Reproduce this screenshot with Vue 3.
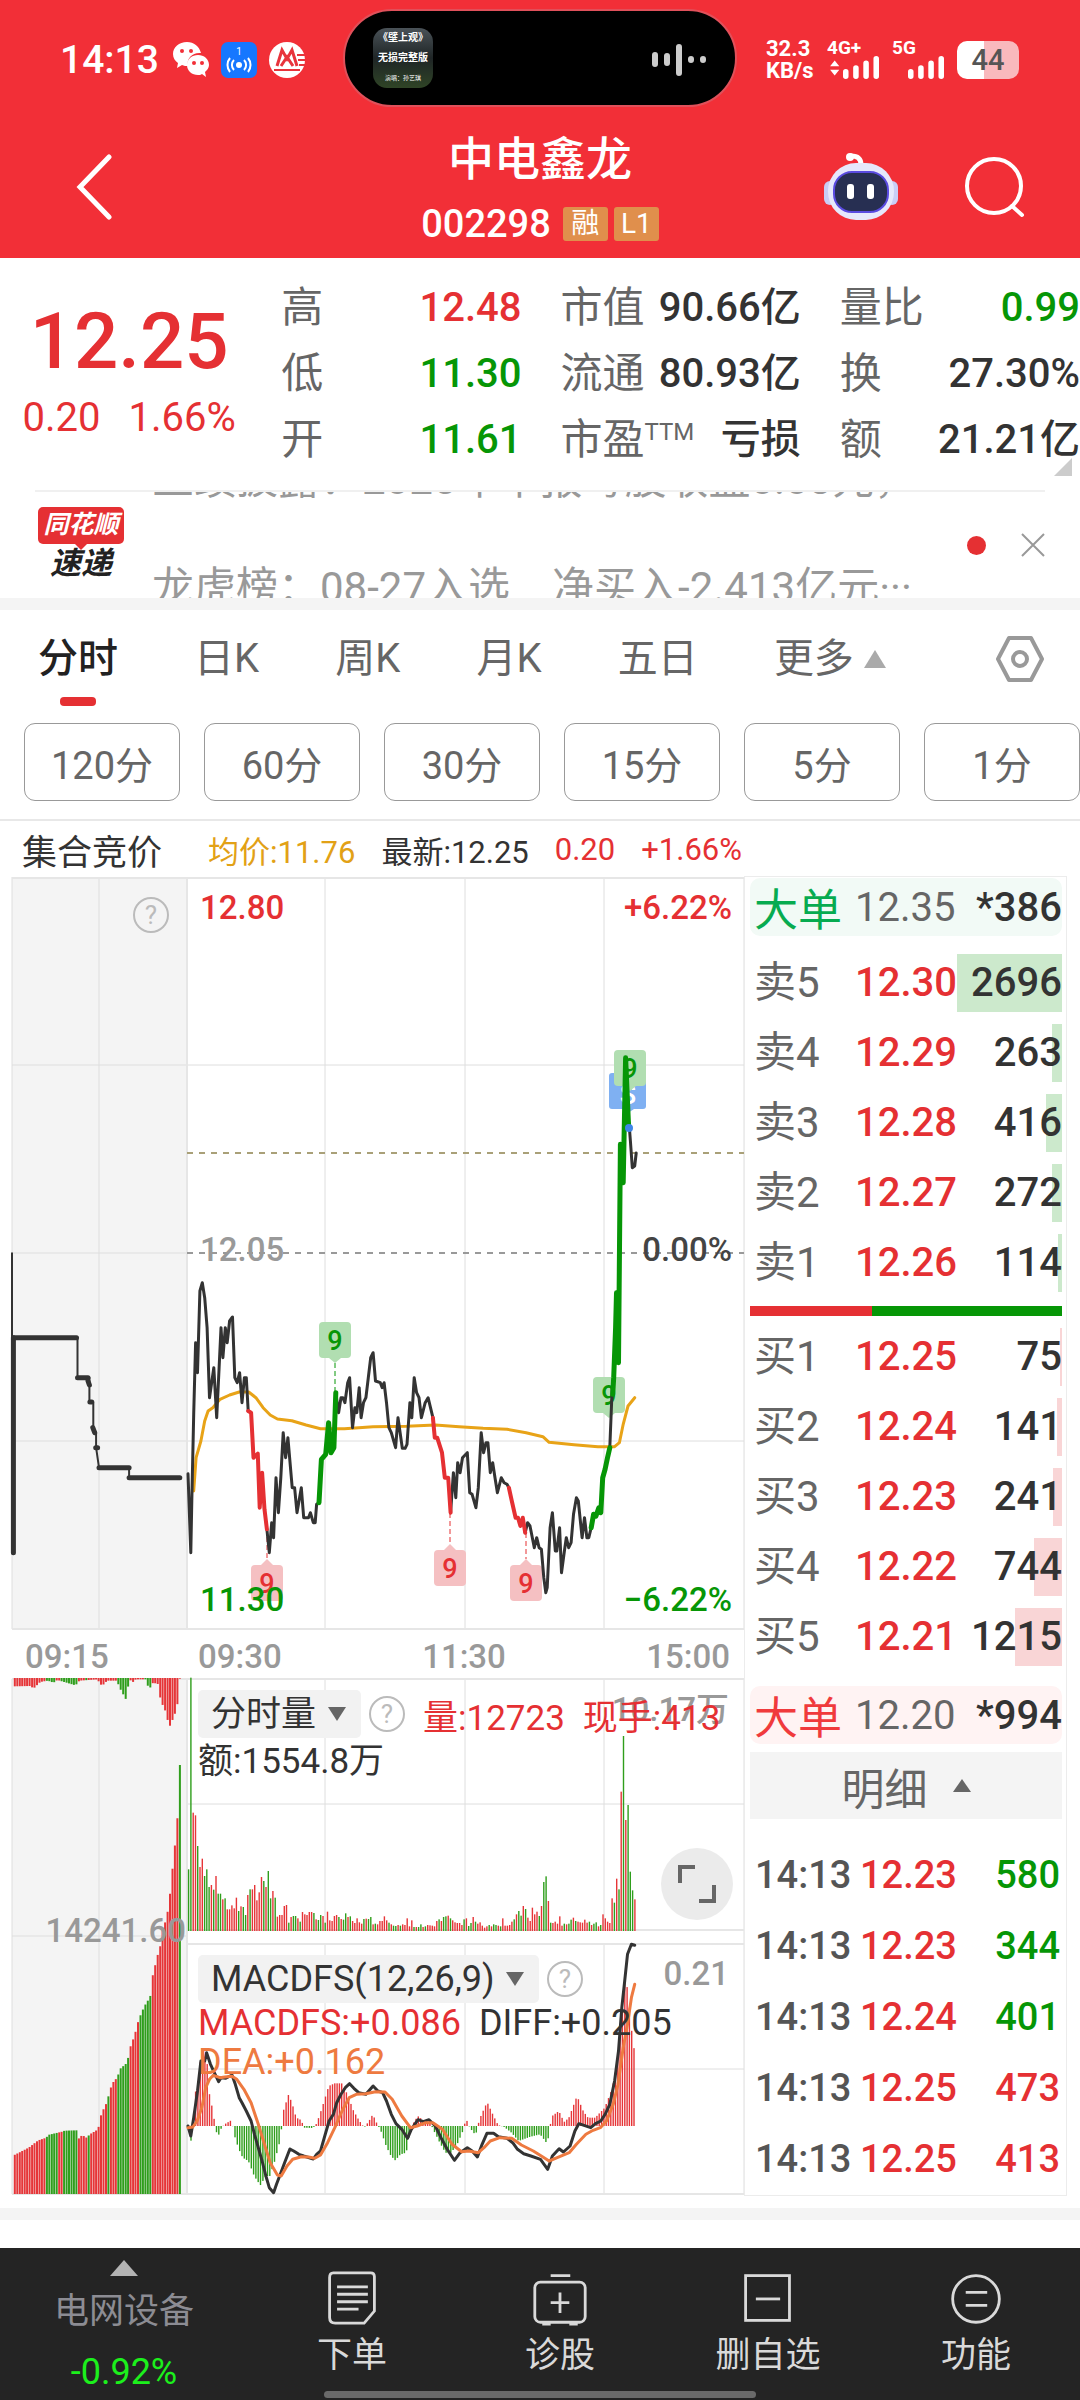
<script setup>
const quoteColumns = [
  [
    { label: '高', value: '12.48', tone: 'up' },
    { label: '低', value: '11.30', tone: 'down' },
    { label: '开', value: '11.61', tone: 'down' }
  ],
  [
    { label: '市值', value: '90.66亿' },
    { label: '流通', value: '80.93亿' },
    { label: '市盈', sup: 'TTM', value: '亏损' }
  ],
  [
    { label: '量比', value: '0.99', tone: 'down' },
    { label: '换', value: '27.30%' },
    { label: '额', value: '21.21亿' }
  ]
]

const tabs = ['日K', '周K', '月K', '五日']
const periods = ['120分', '60分', '30分', '15分', '5分', '1分']

const sells = [
  { label: '卖5', price: '12.30', volume: 2696, bar: 105 },
  { label: '卖4', price: '12.29', volume: 263, bar: 10 },
  { label: '卖3', price: '12.28', volume: 416, bar: 16 },
  { label: '卖2', price: '12.27', volume: 272, bar: 10 },
  { label: '卖1', price: '12.26', volume: 114, bar: 4 }
]
const buys = [
  { label: '买1', price: '12.25', volume: 75, bar: 2 },
  { label: '买2', price: '12.24', volume: 141, bar: 5 },
  { label: '买3', price: '12.23', volume: 241, bar: 9 },
  { label: '买4', price: '12.22', volume: 744, bar: 28 },
  { label: '买5', price: '12.21', volume: 1215, bar: 47 }
]
const trades = [
  { price: '12.23', volume: 580, tone: 'down' },
  { price: '12.23', volume: 344, tone: 'down' },
  { price: '12.24', volume: 401, tone: 'down' },
  { price: '12.25', volume: 473, tone: 'up' },
  { price: '12.25', volume: 413, tone: 'up' }
]

// Series are sampled on a finer grid than the drawing: x / 2.09, y / 3.
const gx = (x) => +(x / 2.0907).toFixed(1)
const parse = (s) => s.split(' ').map((p) => p.split(',').map(Number))
const line = (s, top) => parse(s).map(([x, y]) => `${gx(x)},${(top + y / 3).toFixed(1)}`).join(' ')

const priceSegments = [
  ['flat', '393,878 399,1115 401,960 405,700 409,485 413,575 418,330 423,305 428,350 433,440 438,650 447,560 453,710 458,560 462,440 466,530 471,440 475,485 480,420 486,408 491,590 496,605 501,575 506,665 511,590 515,590 519,690'],
  ['flat', '558,1045 563,1115 568,1025 572,1070 577,890 582,995 587,890 592,755 597,830 602,770 611,920 616,920 621,995 630,920 635,1010 645,1010 649,995 655,1025 659,1025 662,970 667,965'],
  ['flat', '702,635 708,695 713,650 717,650 721,665 727,605 731,590 737,740 742,680 746,695 751,620 755,710 760,665 765,650 770,590 775,530 780,515 785,600 795,605 799,620 803,605 808,665 813,740 818,755 827,800 832,710 841,802 847,802 851,790 857,665 861,710 866,590 871,635 876,650 881,710 889,665 895,650 900,680 905,710'],
  ['flat', '942,995 948,875 953,950 957,845 962,875 967,830 977,815 982,935 987,940 995,980 1000,920 1006,755 1011,815 1016,785 1020,785 1025,875 1030,845 1035,890 1040,935 1048,890 1054,905 1060,910 1064,920'],
  ['flat', '1098,1055 1103,1025 1108,1035 1117,1100 1122,1070 1127,1100 1132,1105 1137,1190 1141,1235 1144,1220 1150,1040 1155,995 1161,1110 1164,1110 1170,1040 1174,1175 1180,1110 1184,1070 1189,1100 1194,1085 1199,1000 1205,950 1209,960 1217,1070 1222,1010 1227,1070 1231,1070 1236,1040'],
  ['flat', '1275,800 1280,620'],
  ['flat', '1315,-175 1318,-120 1322,-40 1327,-45 1330,-84'],
  ['red', '519,690 525,695 530,830 539,818 543,980 548,875 553,985 558,1045'],
  ['red', '905,710 909,770 914,770 924,815 930,890 937,890 942,995'],
  ['red', '1064,920 1070,960 1078,1010 1083,1010 1088,1035 1093,1010 1098,1055'],
  ['green', '667,965 672,835 681,820 687,725 692,815 698,800 702,635'],
  ['green', '1236,1040 1241,1000 1246,1005 1252,980 1256,995 1260,890 1265,865 1270,830 1275,800'],
  ['green', '1281,640 1283,590 1287,440 1289,335 1293,545 1297,-110 1303,5 1308,-370 1314,-170']
].map(([tone, s]) => ({ tone, points: line(s, 1180) }))

const average = line('405,930 410,830 420,780 428,720 435,690 445,680 460,655 480,642 500,633 520,633 535,650 550,680 565,702 580,714 610,719 640,732 670,743 720,743 780,737 850,736 910,732 960,737 1010,742 1060,745 1100,755 1135,767 1148,784 1200,791 1250,797 1285,797 1295,785 1303,730 1313,675 1327,650', 1180)

const auctionThin = line('25,217 25,1115 29,470 162,470 162,590 187,590 187,665 195,665 195,740 201,755 201,800 207,860 270,860 270,890 378,890', 1180)
const auctionThick = ['28,470 28,1115', '29,470 160,470', '162,590 184,590', '184,600 187,612', '188,663 192,663', '194,740 198,755', '200,800 204,800', '207,860 270,860', '270,890 376,890'].map((s) => line(s, 1180))

const flags = [
  { x: 335, y: 1321, tone: 'green', tip: 'down', stem: [1362, 1392] },
  { x: 267, y: 1564, tone: 'red', tip: 'up', stem: [1528, 1558] },
  { x: 450, y: 1549, tone: 'red', tip: 'up', stem: [1512, 1543] },
  { x: 526, y: 1564, tone: 'red', tip: 'up', stem: [1532, 1558] },
  { x: 609, y: 1376, tone: 'green', tip: 'down' },
  { x: 630, y: 1049, tone: 'green', tip: 'down' }
]
const tipPath = (f) =>
  f.tip === 'down' ? `M${f.x - 6} ${f.y + 36}h12l-6 5z` : `M${f.x - 6} ${f.y}h12l-6 -6z`

// Turnover bars of the continuous session.
const volumes = [185, 760, 355, 347, 255, 192, 217, 165, 185, 132, 138, 124, 165, 112, 112, 95, 98, 65, 65, 77, 68, 100, 60, 74, 72, 48, 108, 125, 125, 138, 92, 116, 162, 150, 132, 180, 98, 120, 100, 43, 48, 48, 75, 78, 25, 42, 45, 45, 38, 28, 57, 50, 48, 57, 57, 54, 35, 33, 48, 45, 25, 58, 32, 30, 45, 48, 42, 36, 34, 53, 42, 44, 30, 24, 38, 26, 22, 36, 37, 36, 42, 20, 22, 20, 30, 30, 44, 32, 25, 20, 16, 15, 18, 16, 20, 18, 38, 14, 32, 12, 12, 12, 20, 12, 14, 18, 17, 16, 14, 30, 35, 30, 42, 44, 46, 38, 32, 26, 24, 24, 18, 35, 38, 15, 24, 42, 28, 22, 26, 16, 10, 14, 18, 14, 20, 18, 16, 14, 38, 16, 16, 18, 28, 35, 50, 60, 46, 75, 66, 40, 30, 70, 50, 58, 45, 75, 147, 164, 90, 25, 24, 28, 22, 44, 16, 22, 20, 22, 34, 40, 30, 28, 26, 25, 34, 25, 28, 18, 22, 26, 14, 18, 50, 38, 28, 24, 98, 85, 157, 125, 418, 585, 333, 378, 178, 122, 95]
const headTones = 'ggrrgrrggg'
const tailTones = 'rgrgrgrgggr'
const volumeBars = volumes.map((v, i) => {
  const fromEnd = i - (volumes.length - tailTones.length)
  const hash = (i * 7 + i * i * 3) % 11
  const tone = i < 10 ? headTones[i] : fromEnd >= 0 ? tailTones[fromEnd] : hash < 5 ? 'g' : hash === 5 ? 'n' : 'r'
  return { x: gx(395 + (i * 933) / (volumes.length - 1)) - 1, y: 1930 - v / 3, h: v / 3, tone }
})

const interpolate = (anchors, x) => {
  const k = anchors.findIndex(([ax]) => ax >= x)
  if (k <= 0) return anchors[k < 0 ? anchors.length - 1 : 0][1]
  const [x0, y0] = anchors[k - 1]
  const [x1, y1] = anchors[k]
  return y0 + ((y1 - y0) * (x - x0)) / (x1 - x0)
}

const histAnchors = parse('395,0 399,-53 404,0 409,100 414,130 420,200 428,210 434,185 438,100 443,65 447,35 452,-15 457,-30 462,-10 470,5 485,18 490,-25 500,-70 508,-95 520,-105 532,-150 545,-178 556,-150 565,-150 575,-105 585,-50 590,0 593,45 604,95 612,65 620,25 630,18 637,-5 655,-6 663,8 675,60 688,120 700,128 715,128 727,95 740,45 750,20 762,-5 772,15 780,35 788,10 797,-15 808,-60 818,-90 827,-103 838,-85 850,-80 857,-25 863,5 874,30 885,18 900,10 908,-15 920,-50 932,-80 942,-82 955,-60 967,-20 975,22 983,-5 995,-28 1003,20 1019,72 1030,38 1042,3 1055,-3 1070,-20 1085,-45 1110,-32 1130,-25 1145,-54 1150,-5 1155,30 1169,45 1180,12 1190,25 1207,90 1220,45 1230,25 1245,25 1265,55 1280,110 1290,180 1300,320 1307,440 1313,410 1320,300 1327,225')
const histBars = Array.from({ length: 193 }, (_, i) => {
  const x = 395 + i * 4.85
  const v = interpolate(histAnchors, x) / 3
  return { x: gx(x) - 1, y: v > 0 ? 2125 - v : 2125, h: Math.abs(v), tone: v > 0 ? 'r' : 'g' }
})
const diff = line('393,615 399,645 405,590 413,510 420,420 428,420 432,395 440,430 448,455 457,482 462,470 472,472 485,462 492,490 500,530 506,545 515,570 525,600 532,640 540,680 548,720 556,765 563,800 572,815 578,790 586,760 595,725 606,684 614,690 625,700 635,705 655,714 662,700 670,690 678,650 688,600 697,580 704,545 713,520 722,500 731,488 740,502 750,515 765,520 780,495 790,510 800,515 808,540 818,580 828,608 840,625 852,652 860,625 874,596 885,602 897,596 910,615 922,650 935,685 950,718 962,695 977,680 987,690 998,708 1008,670 1018,637 1032,637 1042,647 1060,652 1072,665 1082,685 1095,698 1110,705 1130,715 1145,745 1155,705 1169,683 1178,693 1192,675 1202,630 1210,608 1235,620 1245,608 1256,600 1265,580 1275,550 1285,480 1293,390 1300,260 1306,180 1312,100 1320,70 1327,73', 1920)
const dea = line('393,620 403,618 412,600 422,560 430,500 438,475 446,463 460,470 470,468 485,466 495,475 510,505 525,545 540,610 555,680 565,725 580,762 588,765 600,735 612,715 630,707 645,708 658,712 670,702 685,665 700,620 715,570 730,530 745,520 765,518 785,512 805,513 820,535 840,585 858,620 872,615 890,605 905,605 925,625 945,670 965,692 980,690 1000,695 1012,680 1025,660 1045,650 1070,652 1090,672 1115,690 1135,708 1148,720 1165,710 1190,695 1205,670 1225,640 1240,628 1255,620 1268,600 1282,550 1292,490 1303,380 1312,310 1320,230 1327,190', 1920)

// Opening auction: matched volume grows from the bottom, unmatched hangs from the top.
const matchedAnchors = parse('30,702 60,680 80,658 97,650 100,642 118,636 130,632 135,629 160,628 163,655 172,642 180,650 190,638 205,625 212,578 222,548 228,520 234,488 246,468 250,445 266,425 272,380 282,340 290,295 302,255 314,228 319,165 325,130 330,100 335,75 340,30 346,0 353,-45 359,-135 365,-217 370,-280 376,-468')
const hangingAnchors = parse('30,25 64,24 70,32 84,12 100,8 112,14 120,6 158,22 166,8 205,4 208,20 216,20 224,8 244,8 252,34 264,66 270,4 278,12 284,4 304,4 312,34 320,14 330,18 336,68 346,100 354,148 360,128 370,92 376,2')
const greenMatched = [[97, 120], [130, 160], [171, 175], [181, 186], [226, 230], [246, 268], [290, 315], [374, 380]]
const greenHanging = [[97, 118], [124, 160], [178, 184], [246, 268], [300, 315]]
const inRanges = (ranges, x) => ranges.some(([a, b]) => x >= a && x < b)
const auctionBars = Array.from({ length: 68 }, (_, i) => {
  const x = 31 + i * 5.15
  const top = 1920 + interpolate(matchedAnchors, x) / 3
  return {
    x: gx(x) - 1,
    top,
    h: 2193 - top,
    tone: inRanges(greenMatched, x) ? 'g' : 'r',
    hang: interpolate(hangingAnchors, x) / 3,
    hangTone: inRanges(greenHanging, x) ? 'g' : 'r'
  }
})
const verticals = [12, 99, 325, 465, 604, 744]
</script>

<template>
  <div class="page">
    <header class="header">
      <div class="status">
        <div class="status-left">
          <span class="clock">14:13</span>
          <svg class="app-icon" viewBox="0 0 36 36">
            <path fill="#fff" d="M14 0C6 0 0 5 0 12c0 4 2 7 5 9l-1 5 5-3c2 1 4 1 6 1-2-8 5-14 13-13C26 4 21 0 14 0z" />
            <path fill="#fff" d="M25 13c-6 0-11 4-11 10s5 10 11 10c1 0 3 0 4-1l4 3-1-5c2-2 4-4 4-7 0-6-5-10-11-10z" />
            <g fill="#f22f37"><circle cx="9" cy="9" r="2" /><circle cx="18" cy="9" r="2" /><circle cx="21" cy="21" r="2" /><circle cx="29" cy="21" r="2" /></g>
          </svg>
          <svg class="app-icon" viewBox="0 0 36 36">
            <rect width="36" height="36" rx="7" fill="#1677ff" />
            <circle cx="18" cy="23" r="3" fill="#fff" />
            <g fill="none" stroke="#fff" stroke-width="2"><path d="M13 18a7 7 0 0 0 0 10M23 18a7 7 0 0 1 0 10M9 16a11 11 0 0 0 0 14M27 16a11 11 0 0 1 0 14" /></g>
            <text x="18" y="13" fill="#fff" font-size="10" text-anchor="middle">1</text>
          </svg>
          <svg class="app-icon" viewBox="0 0 36 36">
            <circle cx="18" cy="18" r="18" fill="#fff" />
            <path d="M8 24 13 8l5 9 5-9 5 16M12 24l6-9 6 9" fill="none" stroke="#e8333b" stroke-width="3" />
            <path d="M5 28h26M28 13h8M29 18h7M30 23h6" stroke="#e8333b" stroke-width="2" />
          </svg>
        </div>
        <div class="island">
          <div class="album"><b>《壁上观》</b><b>无损完整版</b><small>演唱：孙艺琪</small></div>
          <svg class="wave" viewBox="0 0 56 32"><g stroke="#ccc" stroke-width="6" stroke-linecap="round"><path d="M4 11v9M16 12v7M28 3v26M40 15v1M52 15v1" /></g></svg>
        </div>
        <div class="status-right">
          <div class="net">32.3<br />KB/s</div>
          <div class="sim"><span>4G+</span>
            <svg viewBox="0 0 56 26"><path fill="#fff" d="M1 11l5-6 5 6zM1 15h10l-5 6z" /><g stroke="#fff" stroke-width="6" stroke-linecap="round"><path d="M18 17v5M29 13v9M40 8v14M51 3v19" /></g></svg>
          </div>
          <div class="sim"><span>5G</span>
            <svg viewBox="0 0 56 26"><g stroke="#fff" stroke-width="6" stroke-linecap="round"><path d="M18 17v5M29 13v9M40 8v14M51 3v19" /></g></svg>
          </div>
          <div class="battery">44</div>
        </div>
      </div>
      <div class="titlebar">
        <button class="icon-btn" aria-label="返回"><svg width="36" height="66" viewBox="0 0 36 66"><path d="M33 3 4 33l29 30" fill="none" stroke="#fff" stroke-width="5" stroke-linecap="round" /></svg></button>
        <div class="title">
          <h1>中电鑫龙</h1>
          <div class="code"><span>002298</span><i>融</i><i>L1</i></div>
        </div>
        <div class="title-actions">
          <button class="icon-btn" aria-label="智能助手">
            <svg width="74" height="68" viewBox="0 0 74 68">
              <path d="M37 12c0-7-4-9-10-9" fill="none" stroke="#fff" stroke-width="5" stroke-linecap="round" />
              <circle cx="26" cy="4" r="4" fill="#fff" />
              <rect x="0" y="28" width="12" height="24" rx="6" fill="#c9cdf6" /><rect x="62" y="28" width="12" height="24" rx="6" fill="#c9cdf6" />
              <rect x="4" y="10" width="66" height="57" rx="28" fill="#e6e8fb" />
              <rect x="10" y="19" width="54" height="40" rx="18" fill="#272f52" stroke="#5a4be0" stroke-width="2" />
              <rect x="23" y="31" width="7" height="15" rx="3" fill="#fff" /><rect x="43" y="31" width="7" height="15" rx="3" fill="#fff" />
            </svg>
          </button>
          <button class="icon-btn" aria-label="搜索"><svg width="62" height="62" viewBox="0 0 62 62"><circle cx="30" cy="30" r="27" fill="none" stroke="#fff" stroke-width="4" /><path d="M48 50l10 9" stroke="#fff" stroke-width="4" stroke-linecap="round" /></svg></button>
        </div>
      </div>
    </header>

    <section class="quote">
      <div class="last up">
        <strong>12.25</strong>
        <div class="change"><span>0.20</span><span>1.66%</span></div>
      </div>
      <dl v-for="(col, c) in quoteColumns" :key="c">
        <div v-for="item in col" :key="item.label">
          <dt>{{ item.label }}<sup v-if="item.sup">{{ item.sup }}</sup></dt>
          <dd :class="item.tone">{{ item.value }}</dd>
        </div>
      </dl>
      <svg class="corner" viewBox="0 0 18 18"><path d="M18 0v18H0z" fill="#ccc" /></svg>
    </section>

    <section class="news">
      <div class="brand">
        <span class="brand-top">同花顺<svg width="16" height="8" viewBox="0 0 16 8"><path d="M0 0h16L8 8z" fill="#e53033" /></svg></span>
        <span class="brand-bottom">速递</span>
      </div>
      <div class="ticker">
        <p>业绩披露：2025年中报每股收益0.03元，</p>
        <p>龙虎榜：08-27入选　净买入-2.413亿元···</p>
      </div>
      <span class="dot"></span>
      <button class="icon-btn" aria-label="关闭"><svg width="24" height="24" viewBox="0 0 24 24"><path d="M1 1l22 22M23 1 1 23" stroke="#999" stroke-width="2" /></svg></button>
    </section>

    <div class="band"></div>

    <nav class="tabs">
      <button class="active">分时</button>
      <button v-for="t in tabs" :key="t">{{ t }}</button>
      <button class="more">更多<svg width="24" height="20" viewBox="0 0 24 20"><path d="M12 1 23 19H1z" fill="#aaa" /></svg></button>
      <button class="settings" aria-label="设置"><svg width="50" height="48" viewBox="0 0 50 48"><path d="M14 3h22l11 21-11 21H14L3 24z" fill="none" stroke="#999" stroke-width="4" stroke-linejoin="round" /><circle cx="25" cy="24" r="7" fill="none" stroke="#999" stroke-width="4" /></svg></button>
    </nav>
    <div class="periods"><button v-for="p in periods" :key="p">{{ p }}</button></div>

    <main class="board">
      <div class="charts">
        <div class="legend">
          <span class="auction-title">集合竞价</span>
          <span class="avg">均价:11.76</span><span>最新:12.25</span><span class="up">0.20</span><span class="up">+1.66%</span>
        </div>

        <svg class="plot" viewBox="0 870 744 760">
          <rect x="12" y="876" width="175" height="752" fill="#f4f4f4" />
          <g class="grid">
            <path v-for="v in verticals" :key="v" :d="`M${v} 876V1628`" />
            <path d="M12 1064H744M12 1252H187M12 1440H744" />
          </g>
          <g class="frame"><path d="M12 877H744M12 1628H744M187 876V1628" /></g>
          <path d="M187 1152H744" stroke="#a9a078" stroke-width="2" stroke-dasharray="6 6" />
          <path d="M187 1252H744" stroke="#999" stroke-width="2" stroke-dasharray="6 6" />
          <circle cx="151" cy="914" r="17" class="ring" /><text x="151" y="923" class="q">?</text>

          <polyline :points="auctionThin" class="curve flat thin" />
          <polyline v-for="p in auctionThick" :key="p" :points="p" class="curve flat thick" />
          <polyline :points="average" class="curve average" />
          <rect x="609" y="1072" width="37" height="36" rx="3" fill="#7fb0f2" /><path d="M622 1108h12l-6 4z" fill="#7fb0f2" />
          <text x="628" y="1103" class="mark" fill="#fff">S</text>
          <g v-for="(f, i) in flags" :key="i">
            <g :class="['flag', f.tone]"><rect :x="f.x - 16" :y="f.y" width="32" height="36" rx="4" /><path :d="tipPath(f)" /></g>
            <path v-if="f.stem" :d="`M${f.x} ${f.stem[0]}V${f.stem[1]}`" :class="['stem', f.tone]" />
            <text :x="f.x" :y="f.y + 28" :class="['mark', f.tone]">9</text>
          </g>
          <polyline v-for="s in priceSegments" :key="s.points" :points="s.points" :class="['curve', s.tone]" />
          <circle cx="629" cy="1127" r="4" fill="#3e86e8" />

          <g class="axis">
            <text x="200" y="918" class="t-red">12.80</text>
            <text x="732" y="918" class="t-red end">+6.22%</text>
            <text x="200" y="1260" class="t-gray">12.05</text>
            <text x="732" y="1260" class="t-dark end">0.00%</text>
            <text x="200" y="1610" class="t-green">11.30</text>
            <text x="732" y="1610" class="t-green end">−6.22%</text>
          </g>
        </svg>

        <div class="times">
          <span class="auction-time">09:15</span>
          <div><span>09:30</span><span>11:30</span><span>15:00</span></div>
        </div>

        <div class="indicators">
          <svg class="plot" viewBox="0 1674 744 524">
            <rect x="12" y="1678" width="175" height="515" fill="#f4f4f4" />
            <g class="grid">
              <path d="M12 1678V2193M99 1678V2193M12 1935H187M187 1803H744M187 2068H744" />
              <path d="M325 1678V1929M465 1678V1929M604 1678V1929M325 1943V2193M465 1943V2193M604 1943V2193M744 1678V2193" />
            </g>
            <g class="frame"><path d="M12 1678H744M187 1929H744M187 1943H744M12 2193H744M187 1678V2193" /></g>
            <g v-for="b in auctionBars" :key="b.x">
              <rect :x="b.x" :y="b.top" width="2" :height="b.h" :class="b.tone" />
              <rect :x="b.x" y="1677" width="2" :height="b.hang" :class="b.hangTone" />
            </g>
            <rect v-for="b in volumeBars" :key="b.x" :x="b.x" :y="b.y" width="1.4" :height="b.h" :class="b.tone" />
            <rect v-for="b in histBars" :key="b.x" :x="b.x" :y="b.y" width="1.4" :height="b.h" :class="b.tone" />
            <g class="axis">
              <text x="186" y="1941" class="t-gray end">14241.60</text>
              <text x="729" y="1720" class="t-gray end">10.17万</text>
              <text x="729" y="1984" class="t-gray end">0.21</text>
            </g>
            <polyline :points="diff" class="curve flat" />
            <polyline :points="dea" class="curve dea" />
          </svg>
          <div class="overlay volume-head">
            <div class="row">
              <label class="picker"><select aria-label="成交量指标"><option>分时量</option></select><svg width="18" height="14" viewBox="0 0 18 14"><path d="M0 0h18L9 14z" fill="#666" /></svg></label>
              <button class="help" aria-label="指标说明">?</button>
              <span class="up">量:12723</span><span class="up">现手:413</span>
            </div>
            <div class="row second"><span>额:1554.8万</span></div>
          </div>
          <button class="expand" aria-label="全屏"><svg width="40" height="40" viewBox="0 0 40 40"><path d="M3 19V3h15M37 21v16H22" fill="none" stroke="#666" stroke-width="4" /></svg></button>
          <div class="overlay macd-head">
            <div class="row">
              <label class="picker"><select aria-label="副图指标"><option>MACDFS(12,26,9)</option></select><svg width="18" height="14" viewBox="0 0 18 14"><path d="M0 0h18L9 14z" fill="#666" /></svg></label>
              <button class="help" aria-label="指标说明">?</button>
            </div>
            <div class="row second"><span class="up">MACDFS:+0.086</span><span>DIFF:+0.205</span></div>
            <div class="row second"><span class="dea-text">DEA:+0.162</span></div>
          </div>
        </div>
      </div>

      <aside class="book">
        <div class="block sell-block"><b>大单</b><span>12.35</span><em>*386</em></div>
        <table class="levels">
          <tbody>
            <tr v-for="r in sells" :key="r.label">
              <th scope="row">{{ r.label }}</th><td class="up">{{ r.price }}</td>
              <td class="vol"><i class="sell" :style="{ width: r.bar + 'px' }"></i><span>{{ r.volume }}</span></td>
            </tr>
          </tbody>
        </table>
        <div class="ratio"><i></i></div>
        <table class="levels">
          <tbody>
            <tr v-for="r in buys" :key="r.label">
              <th scope="row">{{ r.label }}</th><td class="up">{{ r.price }}</td>
              <td class="vol"><i class="buy" :style="{ width: r.bar + 'px' }"></i><span>{{ r.volume }}</span></td>
            </tr>
          </tbody>
        </table>
        <div class="block buy-block"><b>大单</b><span>12.20</span><em>*994</em></div>
        <button class="detail">明细<svg width="18" height="13" viewBox="0 0 18 13"><path d="M9 0l9 13H0z" fill="#666" /></svg></button>
        <table class="trades">
          <tbody>
            <tr v-for="(t, i) in trades" :key="i">
              <td>14:13</td><td class="up">{{ t.price }}</td><td :class="['vol', t.tone]">{{ t.volume }}</td>
            </tr>
          </tbody>
        </table>
      </aside>
    </main>

    <div class="band"></div>

    <footer class="bottom">
      <button class="sector">
        <svg width="28" height="16" viewBox="0 0 28 16"><path d="M14 0l14 16H0z" fill="#b3b3b3" /></svg>
        <span>电网设备</span><span class="sector-change">-0.92%</span>
      </button>
      <button class="tool">
        <svg viewBox="0 0 60 60"><path d="M10 3h40q4 0 4 4v37L43 57H12q-6 0-6-6V8q0-5 4-5z" /><path d="M14 18h33M14 26h33M14 34h33M14 42h23" /></svg>
        <span>下单</span>
      </button>
      <button class="tool">
        <svg viewBox="0 0 60 60"><rect x="3" y="13" width="54" height="43" rx="6" /><path d="M20 6h21M30 24v22M20 35h20M11 58h9M40 58h9" /></svg>
        <span>诊股</span>
      </button>
      <button class="tool">
        <svg viewBox="0 0 60 60"><rect x="6" y="6" width="47" height="48" /><path d="M17 31h26" /></svg>
        <span>删自选</span>
      </button>
      <button class="tool">
        <svg viewBox="0 0 60 60"><circle cx="30" cy="31" r="25" /><path d="M19 24h23M19 38h23" /></svg>
        <span>功能</span>
      </button>
      <div class="home"></div>
    </footer>
  </div>
</template>

<style>
body { background: #fff; }
</style>

<style scoped>
.page { font-family: Roboto, "Noto Sans CJK SC", sans-serif; color: #333; overflow: hidden; }
.page * { box-sizing: border-box; }
button { border: 0; padding: 0; margin: 0; background: none; font: inherit; color: inherit; }
button svg, .status svg { display: block; }
.up { color: #e53033; }
.down { color: #069606; }

.header { background: #f22f37; color: #fff; height: 258px; }
.status { display: grid; grid-template-columns: minmax(0, 1fr) 394px minmax(0, 1fr); align-items: center; height: 120px; }
.status-left { display: flex; align-items: center; gap: 12px; padding-left: 60px; }
.clock { font-size: 39px; font-weight: 500; margin-right: 2px; }
.app-icon { width: 36px; height: 36px; }
.island { height: 98px; border-radius: 49px; background: #000; border: 2px solid #e0505a; display: flex; align-items: center; justify-content: space-between; padding: 0 28px; margin-bottom: 4px; }
.album { width: 60px; height: 60px; border-radius: 14px; background: linear-gradient(#4a5258, #1f2526 50%, #2f4426); overflow: hidden; display: flex; flex-direction: column; align-items: center; justify-content: space-around; line-height: 14px; }
.album b { font-size: 10px; white-space: nowrap; }
.album small { font-size: 6px; white-space: nowrap; }
.wave { width: 56px; height: 32px; margin-top: 4px; }
.status-right { display: flex; align-items: center; padding-left: 29px; }
.net { width: 61px; font-size: 22px; line-height: 22px; font-weight: 700; }
.sim { width: 65px; font-size: 19px; line-height: 16px; font-weight: 700; }
.sim svg { width: 56px; height: 24px; }
.battery { width: 62px; height: 38px; border-radius: 10px; background: linear-gradient(90deg, #fff 44%, #f9b9bd 44%); color: #555; font-size: 29px; line-height: 38px; font-weight: 500; text-align: center; }

.titlebar { display: grid; grid-template-columns: 1fr auto 1fr; align-items: center; padding: 0 54px 0 76px; height: 134px; }
.icon-btn { display: block; }
.title { text-align: center; margin-right: 22px; }
.title h1 { margin: 0; font-size: 46px; font-weight: 500; line-height: 74px; }
.code { display: flex; align-items: center; justify-content: center; gap: 6px; font-size: 38px; font-weight: 500; line-height: 56px; }
.code span { margin-right: 6px; }
.code i { width: 45px; height: 34px; border-radius: 3px; background: #e08f4c; font-size: 28px; font-weight: 400; line-height: 34px; font-style: normal; }
.title-actions { display: flex; justify-content: flex-end; align-items: center; gap: 66px; }

.quote { position: relative; display: grid; grid-template-columns: 242fr 240fr 240fr 240fr; column-gap: 39px; padding: 17px 0; }
.last { display: flex; flex-direction: column; align-items: center; justify-content: center; padding-left: 16px; }
.last strong { font-size: 78px; line-height: 88px; font-weight: 500; }
.change { display: flex; gap: 28px; font-size: 40px; line-height: 64px; }
dl { margin: 0; }
dl div { display: flex; justify-content: space-between; font-size: 42px; line-height: 66px; height: 66px; white-space: nowrap; }
dt { color: #666; }
dt sup { font-size: 24px; line-height: 24px; vertical-align: 14px; }
dd { margin: 0; font-size: 40px; font-weight: 500; }
.corner { position: absolute; right: 8px; bottom: 14px; width: 18px; height: 18px; }

.news { display: flex; align-items: center; height: 108px; margin: 0 35px; border-top: 2px solid #f0f0f0; overflow: hidden; }
.brand { display: flex; flex-direction: column; align-items: center; width: 92px; font-style: italic; font-weight: 700; }
.brand-top { position: relative; width: 86px; height: 37px; border-radius: 5px; background: #e53033; color: #fff; font-size: 25px; line-height: 36px; text-align: center; }
.brand-top svg { position: absolute; left: 35px; bottom: -6px; }
.brand-bottom { color: #222; font-size: 31px; line-height: 40px; }
.ticker { flex: 1; height: 106px; padding-left: 25px; overflow: hidden; color: #999; }
.ticker p { margin: 0; font-size: 42px; line-height: 108px; white-space: nowrap; }
.ticker p:first-child { margin-top: -66px; }
.dot { width: 19px; height: 19px; border-radius: 10px; background: #e53033; margin-right: 35px; }
.band { height: 12px; background: #f4f4f4; }

.tabs { display: flex; align-items: flex-start; justify-content: space-between; padding: 11px 35px 0 38px; height: 113px; color: #666; font-size: 40px; line-height: 76px; }
.tabs button { position: relative; display: flex; align-items: center; height: 76px; }
.tabs .active { color: #222; font-weight: 500; }
.tabs .active::after { content: ""; position: absolute; left: 50%; margin-left: -18px; bottom: -9px; width: 36px; height: 9px; border-radius: 4px; background: #e53033; }
.more svg { margin-left: 9px; }
.tabs .settings { margin-left: 32px; }
.periods { display: grid; grid-template-columns: repeat(6, 1fr); gap: 24px; padding: 0 0 18px 24px; border-bottom: 2px solid #e8e8e8; }
.periods button { height: 78px; border: 1px solid #999; border-radius: 11px; color: #666; font-size: 38px; }

.board { display: grid; grid-template-columns: minmax(0, 744fr) minmax(0, 336fr); }
.legend { display: flex; align-items: center; height: 50px; padding: 6px 0 0 22px; gap: 26px; font-size: 31px; white-space: nowrap; }
.auction-title { font-size: 35px; margin-right: 20px; }
.avg { color: #e2a116; }
.plot { display: block; width: 100%; height: auto; }
.grid path { stroke: #dedede; stroke-width: 1; fill: none; }
.frame path { stroke: #e6e6e6; stroke-width: 2; fill: none; }
.curve { fill: none; stroke-width: 3; stroke-linejoin: round; stroke-linecap: round; }
.curve.flat { stroke: #333; }
.curve.red { stroke: #e53033; stroke-width: 4; }
.curve.green { stroke: #069606; stroke-width: 5; }
.curve.average { stroke: #e8a317; }
.curve.dea { stroke: #ee7a40; }
.curve.thin { stroke-width: 2; }
.curve.thick { stroke-width: 5; }
.flag.green { fill: #b1deb1; }
.flag.red { fill: #f5c0c2; }
.stem { stroke-width: 1; stroke-dasharray: 5 3; }
.stem.green { stroke: #069606; }
.stem.red { stroke: #e53033; }
.mark { font-size: 27px; font-weight: 500; text-anchor: middle; }
.mark.green { fill: #069606; }
.mark.red { fill: #e53033; }
.ring { fill: none; stroke: #bbb; stroke-width: 2; }
.q { fill: #bbb; font-size: 26px; text-anchor: middle; }
.axis text { font-size: 33px; font-weight: 500; }
.axis .end { text-anchor: end; }
.t-red { fill: #e53033; }
.t-green { fill: #069606; }
.t-gray { fill: #999; }
.t-dark { fill: #444; }
rect.r { fill: #e63538; }
rect.g { fill: #2f9e1c; }
rect.n { fill: #888; }
.times { display: flex; height: 44px; padding: 4px 14px 0 25px; color: #999; font-size: 33px; font-weight: 500; line-height: 44px; }
.auction-time { width: 173px; }
.times div { flex: 1; display: flex; justify-content: space-between; }

.indicators { position: relative; font-size: 35px; white-space: nowrap; }
.overlay { position: absolute; left: 198px; }
.volume-head { top: 15px; }
.macd-head { top: 280px; font-size: 36px; }
.row { display: flex; align-items: center; gap: 18px; height: 48px; }
.row.second { height: 39px; }
.picker { position: relative; display: flex; align-items: center; height: 48px; border-radius: 5px; background: #f2f2f2; margin-right: -10px; }
.picker select { appearance: none; border: 0; margin: 0; padding: 0 44px 0 13px; background: none; font: inherit; color: #333; height: 48px; }
.picker svg { position: absolute; right: 15px; pointer-events: none; }
.help { width: 36px; height: 36px; border: 2px solid #bbb; border-radius: 18px; color: #bbb; font-size: 26px; line-height: 32px; }
.expand { position: absolute; left: 661px; top: 173px; width: 72px; height: 72px; border-radius: 36px; background: #ebebeb; display: flex; align-items: center; justify-content: center; }
.dea-text { color: #ee7a40; }

.book { margin: 55px 13px 0 0; border: 1px solid #ececec; padding: 1px 4px 1px 5px; align-self: start; }
.block { display: flex; align-items: center; height: 58px; border-radius: 10px; padding-left: 4px; font-size: 40px; }
.block b { width: 101px; font-size: 44px; font-weight: 400; }
.block span { color: #666; }
.block em { flex: 1; font-style: normal; font-weight: 500; text-align: right; }
.sell-block { background: #f2faf6; margin-bottom: 12px; }
.sell-block b { color: #07ab50; }
.buy-block { background: #fff3f3; margin: 14px 0 8px; }
.buy-block b { color: #f03a3c; }
table { width: 100%; border-collapse: collapse; table-layout: fixed; }
th, td { padding: 0; text-align: left; font-weight: 500; }
.levels tr { height: 70px; font-size: 40px; line-height: 58px; }
.levels th { width: 105px; padding-left: 4px; color: #666; font-size: 42px; font-weight: 400; }
.levels .vol { position: relative; text-align: right; }
.levels .vol i { position: absolute; right: 0; top: 6px; bottom: 6px; }
.levels .vol span { position: relative; }
.sell { background: #cce9cc; }
.buy { background: #f9d5d6; }
.ratio { height: 10px; background: #069606; margin: 8px 0 6px; }
.ratio i { display: block; width: 39%; height: 10px; background: #e53033; }
.detail { display: flex; align-items: center; justify-content: center; gap: 25px; width: 100%; height: 67px; background: #f4f4f4; color: #666; font-size: 43px; margin-bottom: 20px; }
.trades tr { height: 71px; font-size: 38px; line-height: 50px; }
.trades td:first-child { width: 110px; padding-left: 5px; color: #555; }
.trades .vol { text-align: right; padding-right: 2px; }

.board + .band { margin-top: 9px; }
.bottom { position: relative; display: grid; grid-template-columns: 248fr 208fr 208fr 208fr 208fr; height: 153px; margin-top: 28px; background: #242424; color: #d9d9d9; font-size: 35px; }
.bottom button { display: flex; flex-direction: column; align-items: center; }
.sector { padding-top: 12px; line-height: 60px; color: #8c8c93; }
.sector span:first-of-type { margin-top: 6px; }
.sector-change { color: #1cf01c; font-size: 36px; }
.tool { padding-top: 22px; line-height: 52px; }
.tool svg { width: 56px; height: 56px; margin-bottom: 4px; fill: none; stroke: #d9d9d9; stroke-width: 3; }
.home { position: absolute; left: 30%; right: 30%; bottom: 3px; height: 7px; border-radius: 4px; background: #6a6a6a; }
</style>
